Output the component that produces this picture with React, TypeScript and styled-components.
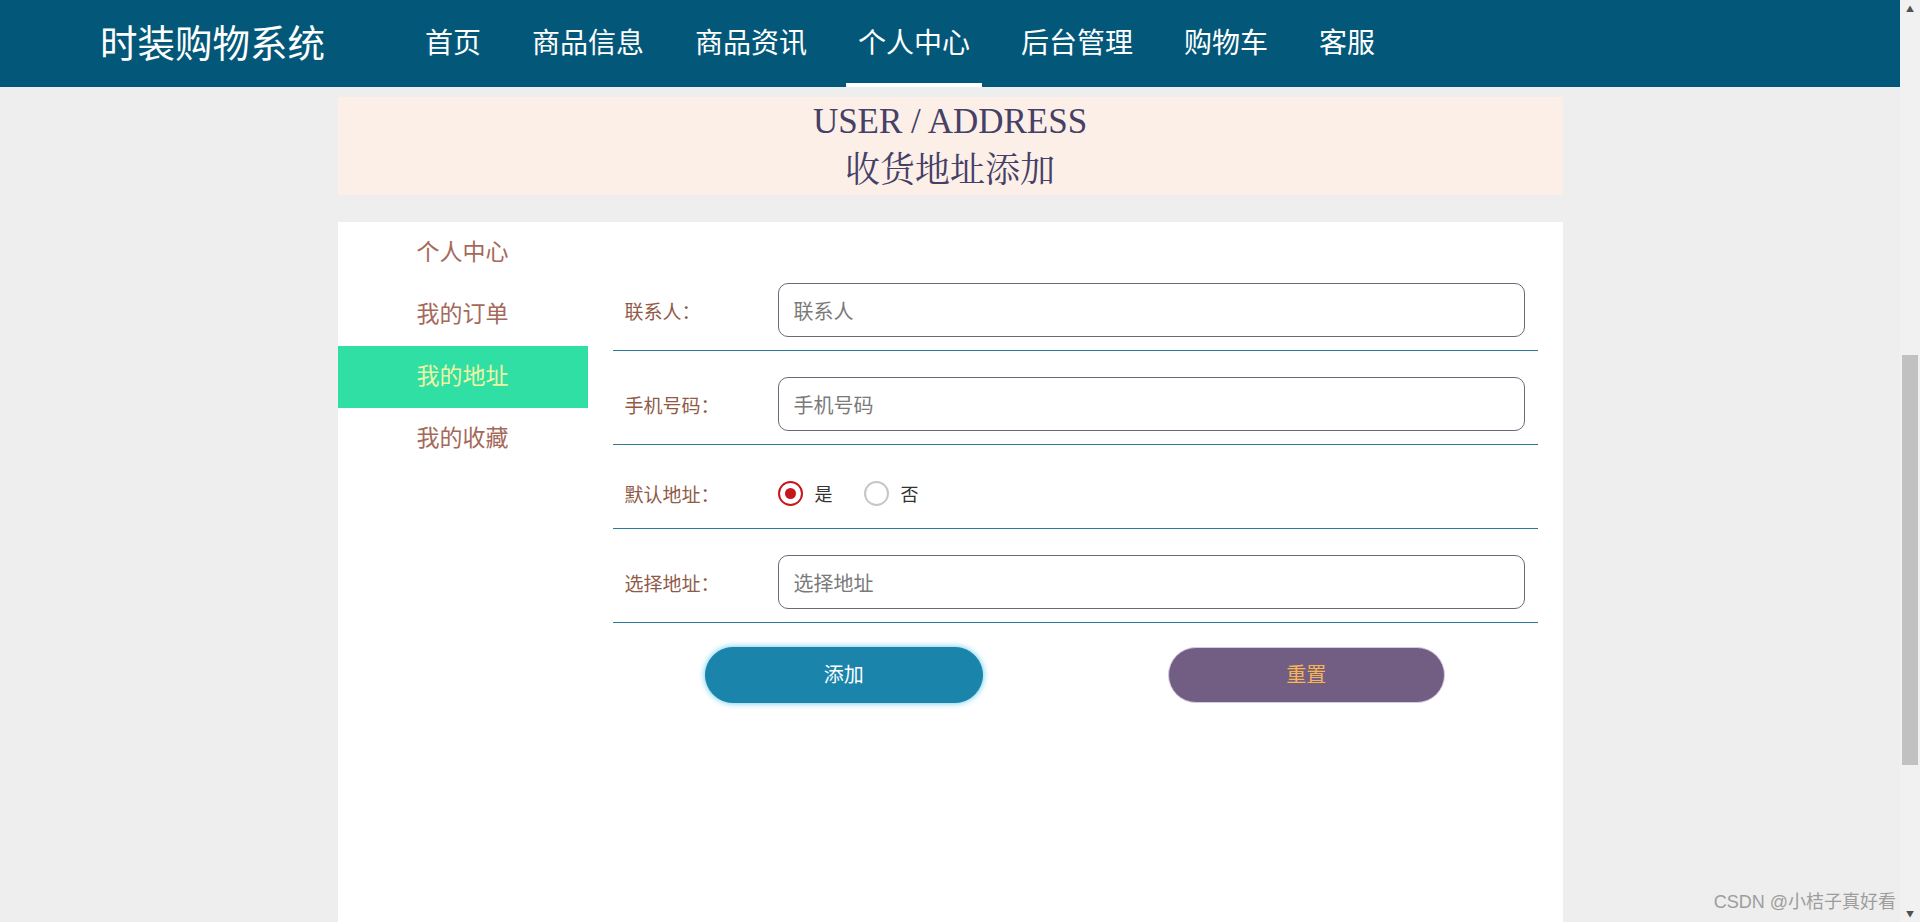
import React, { useState } from "react";
import styled, { createGlobalStyle } from "styled-components";

const GlobalStyle = createGlobalStyle`
  html, body {
    margin: 0;
    padding: 0;
    overflow: hidden;
  }
  body {
    background: #eeeeee;
    font-family: "Noto Sans CJK SC", "Noto Sans", sans-serif;
  }
  * {
    box-sizing: border-box;
  }
`;

const Shell = styled.div`
  display: flex;
  height: 100vh;
  overflow: hidden;
  position: relative;
`;

const Main = styled.div`
  flex: 1;
  display: flex;
  flex-direction: column;
  min-width: 0;
`;

const Header = styled.header`
  height: 87px;
  flex: none;
  background: #035879;
  display: flex;
  padding-left: 100px;
`;

const Logo = styled.div`
  flex: 0 0 313px;
  font-size: 37.5px;
  line-height: 82px;
  color: #fff;
  white-space: nowrap;
`;

const Nav = styled.nav`
  display: flex;
  gap: 27px;
`;

const NavItem = styled.a<{ $active?: boolean }>`
  position: relative;
  padding: 0 12px;
  font-size: 28px;
  line-height: 82px;
  color: #fff;
  text-decoration: none;
  white-space: nowrap;
  cursor: pointer;

  &::after {
    content: "";
    display: ${(p) => (p.$active ? "block" : "none")};
    position: absolute;
    left: 0;
    right: 0;
    bottom: 0;
    height: 4px;
    background: #fff;
  }
`;

const Content = styled.div`
  width: 1225px;
  margin: 10px auto 0;
  flex: 1;
  display: flex;
  flex-direction: column;
`;

const Banner = styled.div`
  background: #fcefe8;
  text-align: center;
  font-family: "Liberation Serif", "Noto Serif CJK SC", "Noto Sans CJK SC", serif;
  font-size: 35px;
  line-height: 49px;
  color: #463f66;
`;

const Card = styled.div`
  margin-top: 27px;
  flex: 1;
  background: #fff;
  display: flex;
`;

const Sidebar = styled.ul`
  list-style: none;
  margin: 0;
  padding: 0;
  width: 250px;
  flex: none;
`;

const SideItem = styled.li<{ $active?: boolean }>`
  height: 62px;
  line-height: 56px;
  padding-left: 79px;
  font-size: 23px;
  color: ${(p) => (p.$active ? "#eef4a6" : "#a5695a")};
  background: ${(p) => (p.$active ? "#2fdfa3" : "transparent")};
  cursor: pointer;
`;

const Form = styled.form`
  flex: 1;
  margin: 35px 25px 0;
`;

const Row = styled.div`
  margin-top: 12px;
  padding: 14px 13px 13px 12px;
  border-bottom: 1px solid #2b7a99;
  display: flex;
  align-items: center;
  min-height: 44px;
`;

const Label = styled.label`
  flex: 0 0 153px;
  font-size: 19px;
  color: #8f5b48;
`;

const Input = styled.input`
  flex: 1;
  height: 54px;
  border: 1px solid #6f6678;
  border-radius: 10px;
  padding: 0 15px;
  font-family: inherit;
  font-size: 20px;
  color: #333;
  outline: none;

  &::placeholder {
    color: #7a7a7a;
  }
`;

const RadioGroup = styled.div`
  display: flex;
  align-items: center;
  gap: 31px;
  height: 44px;
`;

const RadioOption = styled.label`
  display: flex;
  align-items: center;
  gap: 12px;
  font-size: 18px;
  color: #333;
  cursor: pointer;
`;

const RadioDot = styled.span<{ $checked?: boolean }>`
  width: 25px;
  height: 25px;
  border-radius: 50%;
  border: 2px solid ${(p) => (p.$checked ? "#c8161d" : "#c6c6c6")};
  display: flex;
  align-items: center;
  justify-content: center;

  &::after {
    content: "";
    width: 11px;
    height: 11px;
    border-radius: 50%;
    background: ${(p) => (p.$checked ? "#c8161d" : "transparent")};
  }
`;

const Buttons = styled.div`
  margin-top: 24px;
  display: grid;
  grid-template-columns: 1fr 1fr;
  justify-items: center;
`;

const Button = styled.button<{ $variant: "primary" | "reset" }>`
  width: 60%;
  height: 56px;
  border-radius: 28px;
  padding: 0 0 3px;
  font-family: inherit;
  font-size: 20px;
  cursor: pointer;
  border: 1px solid ${(p) => (p.$variant === "primary" ? "#1a84ab" : "#d9c9e2")};
  background: ${(p) => (p.$variant === "primary" ? "#1a84ab" : "#735e83")};
  color: ${(p) => (p.$variant === "primary" ? "#fff" : "#f7b451")};
  box-shadow: ${(p) => (p.$variant === "primary" ? "0 0 6px #55c4ea" : "none")};
`;

const ScrollTrack = styled.div`
  width: 20px;
  flex: none;
  background: #f1f1f1;
  display: flex;
  flex-direction: column;
  align-items: center;
`;

const ScrollArrow = styled.div`
  height: 17px;
  flex: none;
  font-size: 8px;
  line-height: 17px;
  color: #505050;
`;

const ScrollThumb = styled.div`
  width: 16px;
  height: 410px;
  margin-top: 338px;
  margin-bottom: auto;
  background: #c1c1c1;
`;

const Watermark = styled.div`
  position: absolute;
  right: 24px;
  bottom: 10px;
  font-family: "Liberation Sans", "Noto Sans CJK SC", sans-serif;
  font-size: 18px;
  line-height: 20px;
  color: #9d9d9d;
  white-space: nowrap;
`;

const navItems = ["首页", "商品信息", "商品资讯", "个人中心", "后台管理", "购物车", "客服"];
const sideItems = ["个人中心", "我的订单", "我的地址", "我的收藏"];

const App: React.FC = () => {
  const [isDefault, setIsDefault] = useState(true);

  return (
    <Shell>
      <GlobalStyle />
      <Main>
        <Header>
          <Logo>时装购物系统</Logo>
          <Nav>
            {navItems.map((item) => (
              <NavItem key={item} $active={item === "个人中心"}>
                {item}
              </NavItem>
            ))}
          </Nav>
        </Header>

        <Content>
          <Banner>
            <div>USER / ADDRESS</div>
            <div>收货地址添加</div>
          </Banner>

          <Card>
            <Sidebar>
              {sideItems.map((item) => (
                <SideItem key={item} $active={item === "我的地址"}>
                  {item}
                </SideItem>
              ))}
            </Sidebar>

            <Form onSubmit={(e) => e.preventDefault()}>
              <Row>
                <Label>联系人：</Label>
                <Input placeholder="联系人" />
              </Row>
              <Row>
                <Label>手机号码：</Label>
                <Input placeholder="手机号码" />
              </Row>
              <Row>
                <Label>默认地址：</Label>
                <RadioGroup>
                  <RadioOption onClick={() => setIsDefault(true)}>
                    <RadioDot $checked={isDefault} />
                    是
                  </RadioOption>
                  <RadioOption onClick={() => setIsDefault(false)}>
                    <RadioDot $checked={!isDefault} />
                    否
                  </RadioOption>
                </RadioGroup>
              </Row>
              <Row>
                <Label>选择地址：</Label>
                <Input placeholder="选择地址" />
              </Row>
              <Buttons>
                <Button type="submit" $variant="primary">添加</Button>
                <Button type="reset" $variant="reset">重置</Button>
              </Buttons>
            </Form>
          </Card>
        </Content>
      </Main>

      <ScrollTrack>
        <ScrollArrow>▲</ScrollArrow>
        <ScrollThumb />
        <ScrollArrow>▼</ScrollArrow>
      </ScrollTrack>

      <Watermark>CSDN @小桔子真好看</Watermark>
    </Shell>
  );
};

export default App;
